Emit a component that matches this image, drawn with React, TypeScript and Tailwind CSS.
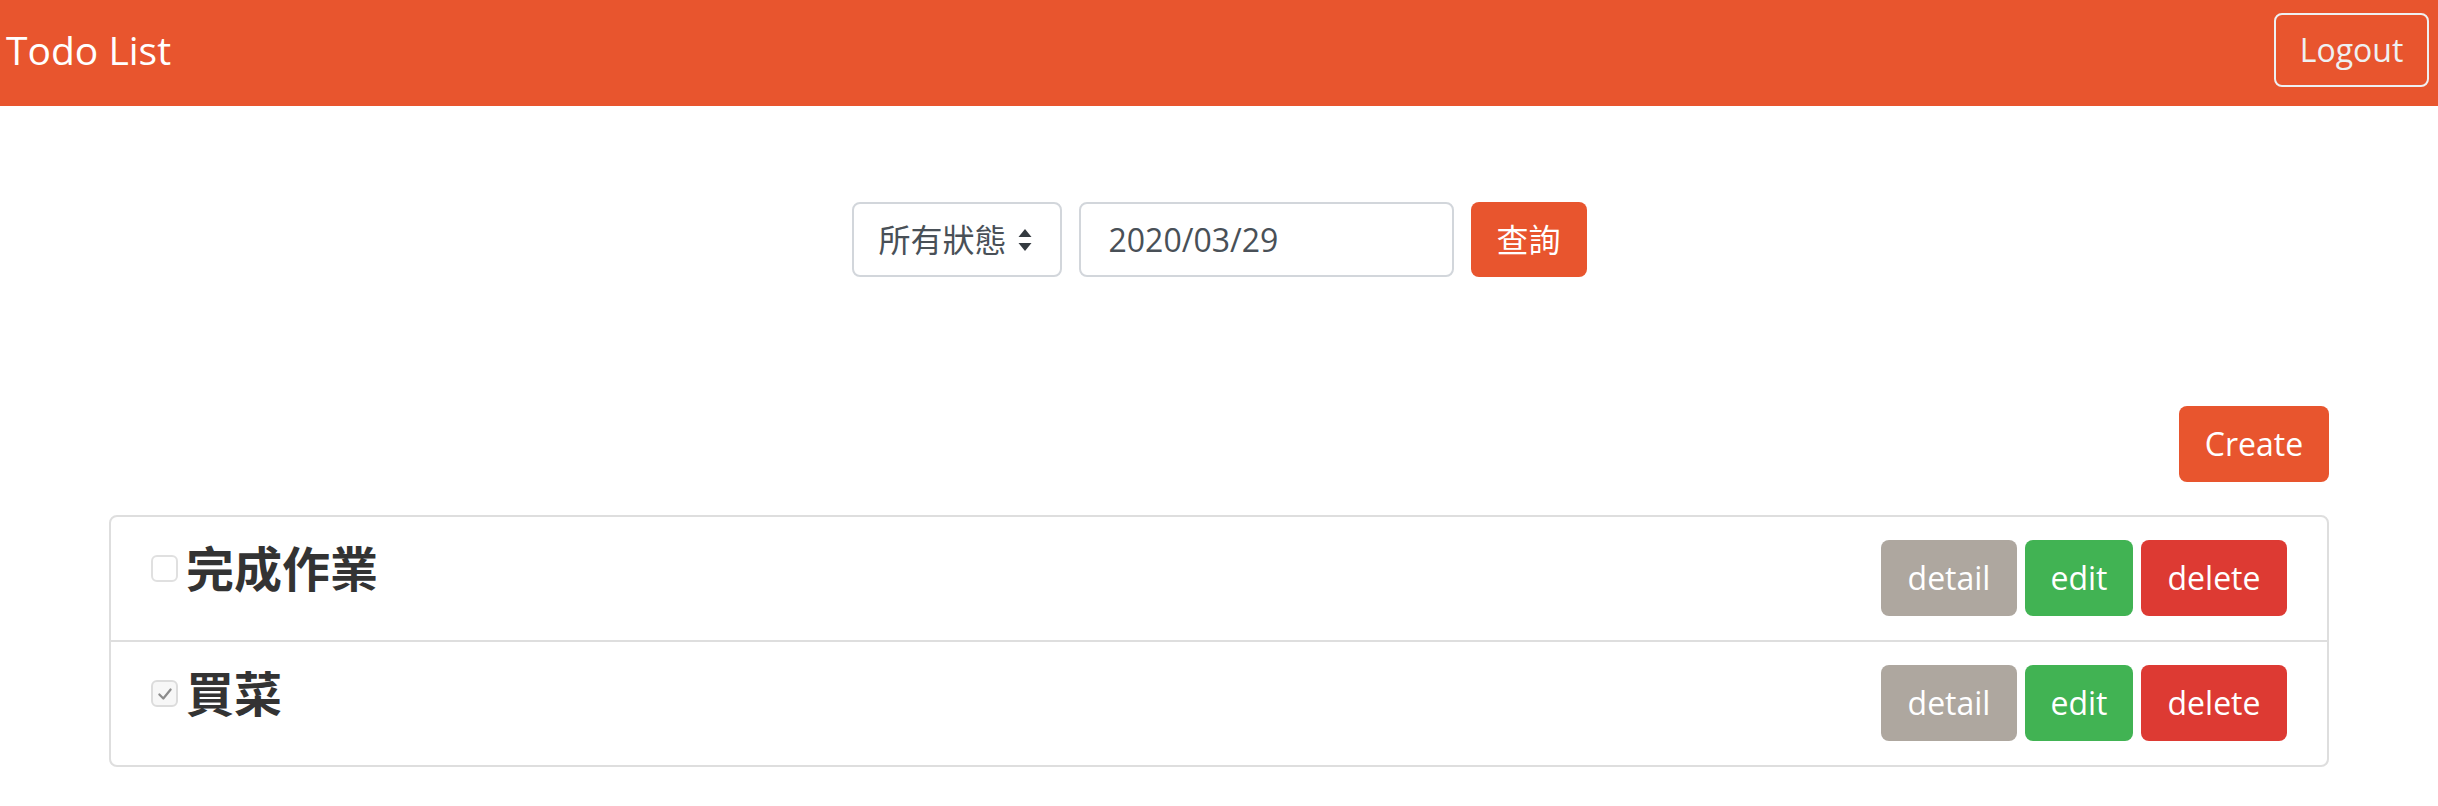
import React from "react";

const font = { fontFamily: '"Open Sans", "Noto Sans CJK TC", sans-serif' };

function Row({ title, checked, last }: { title: string; checked: boolean; last?: boolean }) {
  return (
    <div
      className={
        "flex items-start justify-between px-[40px] pt-[23px] pb-[24px] " +
        (last ? "" : "border-b-2 border-[#dedede]")
      }
    >
      <div className="flex items-center gap-[8px]">
        <div
          className={
            "w-[27px] h-[27px] rounded-[6px] border-2 flex items-center justify-center " +
            (checked ? "border-[#dcdcdc] bg-[#f7f7f7]" : "border-[#e0e0e0] bg-white")
          }
        >
          {checked && (
            <svg width="18" height="18" viewBox="0 0 16 16" fill="none">
              <path d="M3 8.5 L6.5 12 L13 4" stroke="#8c8c8c" strokeWidth="2" strokeLinecap="round" strokeLinejoin="round" />
            </svg>
          )}
        </div>
        <h4 className="text-[48px] leading-[57px] font-bold text-[#333333]">{title}</h4>
      </div>
      <div className="flex gap-[8px]">
        <button className="w-[136px] h-[76px] rounded-[8px] bg-[#aea79f] text-white text-[32px] flex items-center justify-center">
          detail
        </button>
        <button className="w-[108px] h-[76px] rounded-[8px] bg-[#41b353] text-white text-[32px] flex items-center justify-center">
          edit
        </button>
        <button className="w-[146px] h-[76px] rounded-[8px] bg-[#dd3a33] text-white text-[32px] flex items-center justify-center">
          delete
        </button>
      </div>
    </div>
  );
}

export default function App() {
  return (
    <div className="min-h-[806px] bg-white" style={font}>
      <nav className="h-[106px] bg-[#e8552e] flex items-center justify-between pl-[6px] pr-[9px] pt-[0px] pb-[6px]">
        <span className="text-white text-[39px] leading-[60px]">Todo List</span>
        <button className="w-[155px] h-[74px] rounded-[8px] border-2 border-[#eef0f2] text-[#eef0f2] text-[32px] flex items-center justify-center">
          Logout
        </button>
      </nav>

      <div className="mt-[96px] flex justify-center gap-[17px]">
        <div className="w-[210px] h-[75px] rounded-[8px] border-2 border-[#d2d6db] bg-white flex items-center justify-between pl-[25px] pr-[28px] text-[32px] text-[#495057]">
          <span>所有狀態</span>
          <svg width="14" height="26" viewBox="0 0 14 26">
            <path d="M7 2 L13.5 10 L0.5 10 Z" fill="#343a40" />
            <path d="M7 24 L13.5 16 L0.5 16 Z" fill="#343a40" />
          </svg>
        </div>
        <input
          readOnly
          value="2020/03/29"
          className="w-[375px] h-[75px] rounded-[8px] border-2 border-[#d2d6db] bg-white pl-[28px] text-[32px] text-[#495057] outline-none"
        />
        <button className="w-[116px] h-[75px] rounded-[8px] bg-[#e8552e] text-white text-[32px] flex items-center justify-center">
          查詢
        </button>
      </div>

      <div className="w-[2220px] mx-auto">
        <div className="mt-[129px] flex justify-end">
          <button className="w-[150px] h-[76px] rounded-[8px] bg-[#e8552e] text-white text-[32px] flex items-center justify-center">
            Create
          </button>
        </div>
        <div className="mt-[33px] border-2 border-[#dedede] rounded-[8px]">
          <Row title="完成作業" checked={false} />
          <Row title="買菜" checked={true} last />
        </div>
      </div>
    </div>
  );
}
